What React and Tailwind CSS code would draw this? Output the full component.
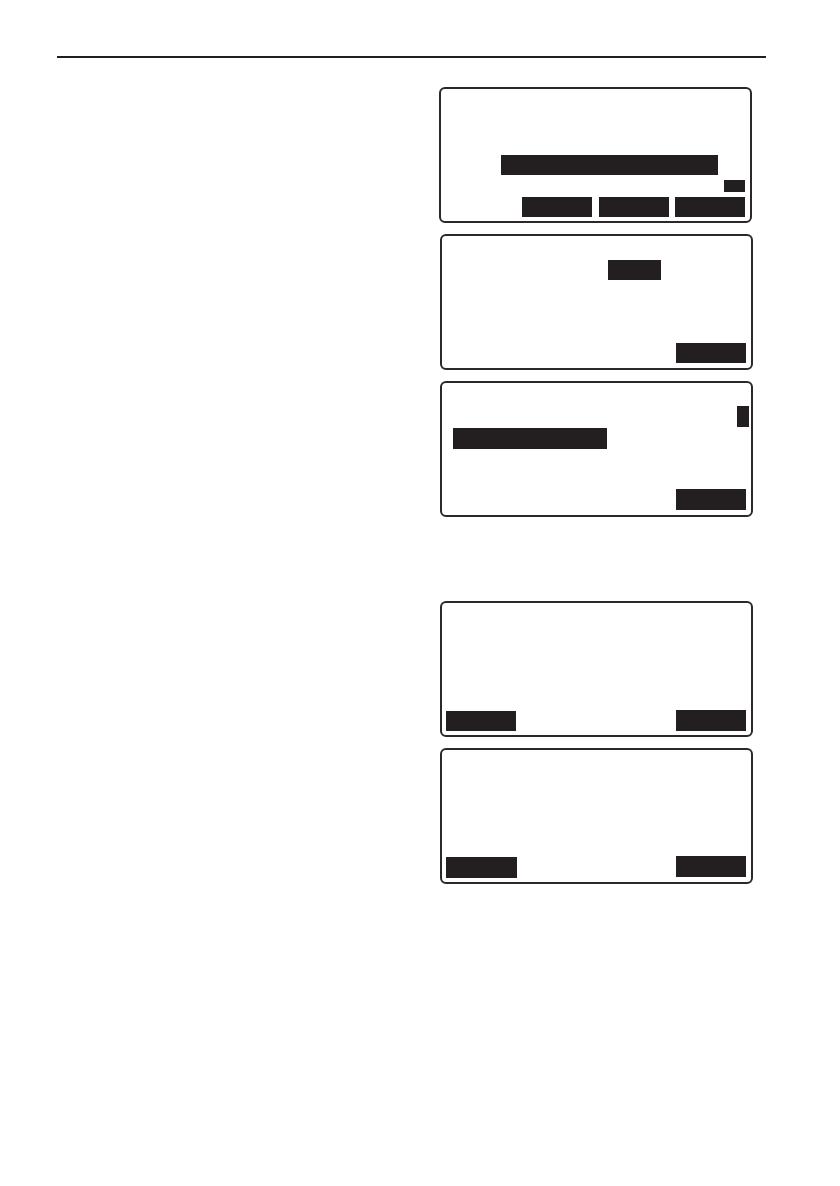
function Key({ className = '' }) {
  return <div className={`h-[20px] w-[70px] bg-[#231f20] ${className}`} />;
}

function Screen({ className = '', children }) {
  return (
    <div className={`flex h-[136px] w-[313px] flex-col rounded-[6px] border-2 border-[#2b2829] bg-white ${className}`}>
      {children}
    </div>
  );
}

export default function App() {
  return (
    <div className="h-[1186px] w-[840px] bg-white font-['Liberation_Sans',sans-serif]">
      {/* header rule */}
      <div className="ml-[57px] pt-[56px]">
        <div className="h-[2px] w-[709px] bg-[#231f20]" />
      </div>

      <div className="ml-[439px] mt-[29px] flex w-[314px] flex-col">
        {/* screen 1 */}
        <Screen>
          <div className="ml-[60px] mt-[66px] h-[20px] w-[217px] bg-[#231f20]" />
          <div className="mr-[5px] mt-[5px] flex justify-end">
            <div className="h-[12px] w-[21px] bg-[#231f20]" />
          </div>
          <div className="mr-[5px] mt-[5px] flex justify-end gap-[6px]">
            <Key className="mr-[1px]" />
            <Key />
            <Key />
          </div>
        </Screen>

        {/* screen 2 */}
        <Screen className="ml-[1px] mt-[11px]">
          <div className="ml-[166px] mt-[24px] h-[20px] w-[53px] bg-[#231f20]" />
          <div className="mt-auto flex justify-end pb-[5px] pr-[5px]">
            <Key />
          </div>
        </Screen>

        {/* screen 3 */}
        <Screen className="ml-[1px] mt-[11px]">
          <div className="mr-[2px] mt-[23px] flex justify-end">
            <div className="h-[21px] w-[12px] bg-[#231f20]" />
          </div>
          <div className="ml-[11px] mt-[1px] h-[21px] w-[154px] bg-[#231f20]" />
          <div className="mt-auto flex justify-end pb-[5px] pr-[5px]">
            <Key className="h-[21px]" />
          </div>
        </Screen>

        {/* screen 4 */}
        <Screen className="ml-[1px] mt-[84px] h-[135px]">
          <div className="mt-auto flex items-end justify-between pb-[4px] pl-[4px] pr-[5px]">
            <Key />
            <Key className="h-[21px]" />
          </div>
        </Screen>

        {/* screen 5 */}
        <Screen className="ml-[1px] mt-[11px]">
          <div className="mt-auto flex items-end justify-between pb-[4px] pl-[4px] pr-[5px]">
            <Key className="w-[71px] h-[21px]" />
            <div className="mb-[1px]">
              <Key className="h-[21px]" />
            </div>
          </div>
        </Screen>
      </div>
    </div>
  );
}
